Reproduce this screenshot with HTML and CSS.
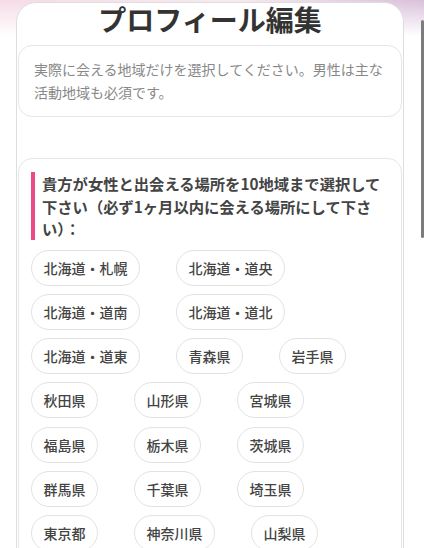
FILE: index.html
```html
<!DOCTYPE html>
<html lang="ja">
<head>
    <meta charset="UTF-8">
    <meta name="viewport" content="width=device-width, initial-scale=1.0">
    <title>プロフィール編集</title>
    <link rel="stylesheet" href="styles.css">
</head>
<body>
    <div class="page">
        <div class="card">
            <h1 class="title">プロフィール編集</h1>

            <div class="notice">
                実際に会える地域だけを選択してください。男性は主な活動地域も必須です。
            </div>

            <div class="section">
                <h3 class="section-head">貴方が女性と出会える場所を10地域まで選択して下さい（必ず1ヶ月以内に会える場所にして下さい）：</h3>
                <div class="chips">
                    <span class="chip">北海道・札幌</span>
                    <span class="chip">北海道・道央</span>
                    <span class="chip">北海道・道南</span>
                    <span class="chip">北海道・道北</span>
                    <span class="chip">北海道・道東</span>
                    <span class="chip">青森県</span>
                    <span class="chip">岩手県</span>
                    <span class="chip">秋田県</span>
                    <span class="chip">山形県</span>
                    <span class="chip">宮城県</span>
                    <span class="chip">福島県</span>
                    <span class="chip">栃木県</span>
                    <span class="chip">茨城県</span>
                    <span class="chip">群馬県</span>
                    <span class="chip">千葉県</span>
                    <span class="chip">埼玉県</span>
                    <span class="chip">東京都</span>
                    <span class="chip">神奈川県</span>
                    <span class="chip">山梨県</span>
                    <span class="chip">新潟県</span>
                    <span class="chip">長野県</span>
                    <span class="chip">富山県</span>
                </div>
            </div>
        </div>
    </div>
    <div class="scroll-thumb"></div>
</body>
</html>
```

FILE: styles.css
```css
html {
    overflow: hidden;
}
body {
    margin: 0;
    height: 548px;
    overflow: hidden;
    font-family: "Noto Sans CJK JP", "Noto Sans", sans-serif;
    color: #444;
    background:
        linear-gradient(180deg, rgba(255,255,255,0) 0, #fff 36px),
        linear-gradient(90deg, #f5dbe6 0, #f9e9f0 55%, #d9c0db 100%);
}
.page {
    padding: 2px 20px 0 16px;
}
.card {
    background: white;
    border: 1px solid #dedede;
    border-radius: 20px;
    padding: 0 1px 20px;
}
.title {
    margin: 0;
    font-size: 28px;
    line-height: 32px;
    font-weight: bold;
    color: #333;
    text-align: center;
}
.notice {
    margin-top: 10px;
    padding: 12px 15px;
    border: 1px solid #e6e6e6;
    border-radius: 14px;
    font-size: 14px;
    line-height: 23px;
    color: #888;
}
.section {
    margin-top: 41px;
    padding: 13px 12px;
    border: 1px solid #e6e6e6;
    border-radius: 14px;
}
.section-head {
    margin: 0;
    padding-left: 7px;
    border-left: 4px solid #ea4a87;
    font-size: 15.3px;
    line-height: 22.5px;
    font-weight: bold;
    color: #444;
}
.chips {
    display: flex;
    flex-wrap: wrap;
    gap: 8.3px 36px;
    margin-top: 10px;
}
.chip {
    display: inline-block;
    height: 34px;
    line-height: 34px;
    padding: 0 11.5px;
    border: 1px solid #e2e2e2;
    border-radius: 18px;
    font-size: 14px;
    font-weight: 500;
    color: #444;
    white-space: nowrap;
}
.scroll-thumb {
    position: absolute;
    top: 20px;
    right: 0;
    width: 3px;
    height: 218px;
    background: #7c7c7c;
    border-radius: 2px;
}
```
